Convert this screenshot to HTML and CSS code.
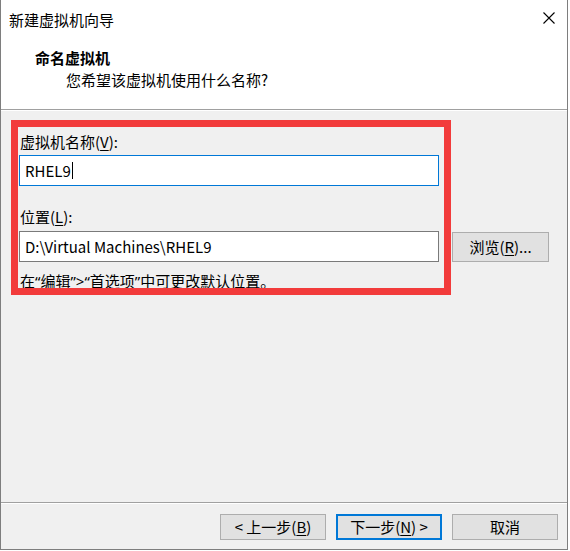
FILE: index.html
```html
<!DOCTYPE html>
<html lang="zh-CN">
<head>
<meta charset="utf-8">
<title>新建虚拟机向导</title>
<link rel="stylesheet" href="styles.css">
</head>
<body>
<div class="window">
  <div class="top">
    <div class="titlebar">
      <span class="title">新建虚拟机向导</span>
      <svg class="close" width="12" height="12" viewBox="0 0 12 12"><path d="M0.5 0.5 L11.5 11.5 M11.5 0.5 L0.5 11.5" stroke="#000" stroke-width="1.1" fill="none"/></svg>
    </div>
    <div class="header">
      <div class="heading">命名虚拟机</div>
      <div class="subheading">您希望该虚拟机使用什么名称?</div>
    </div>
  </div>
  <div class="content">
    <div class="form">
      <div class="label">虚拟机名称(<u>V</u>):</div>
      <div class="field focused"><span>RHEL9</span><span class="caret"></span></div>
      <div class="label second">位置(<u>L</u>):</div>
      <div class="row">
        <div class="field">D:\Virtual Machines\RHEL9</div>
        <div class="btn browse">浏览(<u>R</u>)...</div>
      </div>
      <div class="hint">在<span class="q">“</span>编辑<span class="q">”&gt;“</span>首选项<span class="q">”</span>中可更改默认位置。</div>
    </div>
    <div class="highlight"></div>
  </div>
  <div class="footer">
    <div class="btn">&lt; 上一步(<u>B</u>)</div>
    <div class="btn default">下一步(<u>N</u>) &gt;</div>
    <div class="btn">取消</div>
  </div>
</div>
</body>
</html>
```
FILE: styles.css
```css
html, body {
  margin: 0;
  padding: 0;
  background: #ffffff;
}
body {
  font-family: "Noto Sans CJK SC", sans-serif;
  font-size: 15px;
  color: #000;
}
.q {
  font-family: "Noto Sans", sans-serif;
}
.window {
  width: 568px;
  height: 550px;
  box-sizing: border-box;
  border-left: 1px solid #7e7e7e;
  border-right: 1px solid #7e7e7e;
  border-bottom: 1px solid #7e7e7e;
  display: flex;
  flex-direction: column;
  background: #f0f0f0;
}
.top {
  background: #fff;
  height: 110px;
  box-sizing: border-box;
  border-bottom: 1px solid #a0a0a0;
}
.titlebar {
  height: 38px;
  display: flex;
  align-items: center;
  justify-content: space-between;
  padding-left: 8px;
  padding-right: 12px;
}
.title {
  line-height: 20px;
  margin-top: 1px;
}
.close {
  display: block;
  margin-top: -2px;
}
.header {
  padding-left: 34px;
}
.heading {
  font-weight: bold;
  line-height: 20px;
  margin-top: 10px;
}
.subheading {
  line-height: 20px;
  margin-top: 2px;
  padding-left: 31px;
}
.content {
  position: relative;
  flex: 1;
  box-shadow: inset 0 1px 0 #ffffff;
}
.form {
  padding: 22px 0 0 18px;
}
.label {
  line-height: 20px;
  padding-left: 1px;
}
.label.second {
  margin-top: 21px;
}
u {
  text-decoration: underline;
  text-underline-offset: 2px;
}
.field {
  width: 420px;
  height: 31px;
  box-sizing: border-box;
  border: 1px solid #7a7a7a;
  background: #fff;
  display: flex;
  align-items: center;
  padding-left: 5px;
  line-height: 20px;
}
.field.focused {
  border-color: #0078d7;
  margin-top: 3px;
}
.caret {
  display: inline-block;
  width: 1px;
  height: 17px;
  background: #000;
  margin-left: 1px;
}
.row {
  display: flex;
  align-items: center;
  gap: 13px;
  margin-top: 4px;
}
.btn {
  width: 106px;
  height: 26px;
  box-sizing: border-box;
  background: #e1e1e1;
  border: 1px solid #adadad;
  display: flex;
  align-items: center;
  justify-content: center;
  line-height: 20px;
}
.btn.browse {
  width: 97px;
  height: 30px;
  margin-top: 1px;
}
.btn.default {
  border: 2px solid #0078d7;
}
.hint {
  line-height: 20px;
  margin-top: 9px;
  padding-left: 1px;
}
.highlight {
  position: absolute;
  left: 10px;
  top: 10px;
  width: 440px;
  height: 175px;
  box-sizing: border-box;
  border: 7px solid #f23b3b;
  pointer-events: none;
}
.footer {
  height: 47px;
  box-sizing: border-box;
  border-top: 1px solid #a0a0a0;
  box-shadow: inset 0 1px 0 #ffffff;
  display: flex;
  justify-content: flex-end;
  align-items: flex-start;
  gap: 10px;
  padding: 11px 9px 0 0;
}
```
